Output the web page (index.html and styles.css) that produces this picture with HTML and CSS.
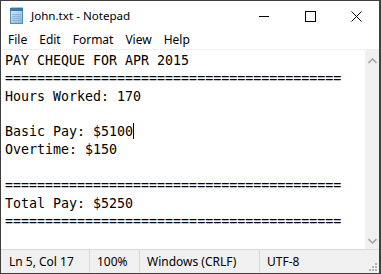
FILE: index.html
```html
<!DOCTYPE html>
<html>
<head>
<meta charset="utf-8">
<title>John.txt - Notepad</title>
<link rel="stylesheet" href="styles.css">
</head>
<body>
<div class="window">
  <div class="titlebar">
    <svg class="app-icon" width="17" height="17" viewBox="0 0 17 17">
      <defs>
        <linearGradient id="pg" x1="0" y1="0" x2="1" y2="1">
          <stop offset="0" stop-color="#d8ecfa"/>
          <stop offset="1" stop-color="#7fb4df"/>
        </linearGradient>
      </defs>
      <rect x="2.5" y="2.5" width="12" height="14" fill="url(#pg)" stroke="#5a8bb5"/>
      <rect x="2" y="1" width="13" height="3" fill="#3f77a8"/>
      <path d="M4 1v-1M6 1v-1M8 1v-1M10 1v-1M12 1v-1M14 1v-1" stroke="#6a8aa6" stroke-width="1"/>
      <path d="M4 7.5h9M4 9.5h9M4 11.5h9M4 13.5h9" stroke="#8fb6d8" stroke-width="1"/>
    </svg>
    <span class="title">John.txt - Notepad</span>
    <div class="controls">
      <div class="ctl"><svg width="10" height="10" viewBox="0 0 10 10"><path d="M0 5.5h10" stroke="#000" stroke-width="1"/></svg></div>
      <div class="ctl"><svg width="11" height="11" viewBox="0 0 11 11"><rect x="0.5" y="0.5" width="10" height="10" fill="none" stroke="#000"/></svg></div>
      <div class="ctl"><svg width="11" height="11" viewBox="0 0 11 11"><path d="M0.5 0.5l10 10M10.5 0.5l-10 10" stroke="#000" stroke-width="1"/></svg></div>
    </div>
  </div>
  <div class="menubar">
    <span class="menu-item">File</span>
    <span class="menu-item">Edit</span>
    <span class="menu-item">Format</span>
    <span class="menu-item">View</span>
    <span class="menu-item">Help</span>
  </div>
  <div class="editor">
    <div class="text">PAY CHEQUE FOR APR 2015
==========================================
Hours Worked: 170

Basic Pay: $5100<span class="caret"></span>
Overtime: $150

==========================================
Total Pay: $5250
==========================================</div>
    <div class="scrollbar">
      <svg class="arrow" width="9" height="6" viewBox="0 0 9 6"><path d="M0.5 5L4.5 1L8.5 5" fill="none" stroke="#a6a6a6" stroke-width="1.6"/></svg>
      <svg class="arrow" width="9" height="6" viewBox="0 0 9 6"><path d="M0.5 1L4.5 5L8.5 1" fill="none" stroke="#a6a6a6" stroke-width="1.6"/></svg>
    </div>
  </div>
  <div class="statusbar">
    <div class="cell c1">Ln 5, Col 17</div>
    <div class="cell c2">100%</div>
    <div class="cell c3">Windows (CRLF)</div>
    <div class="cell c4">UTF-8</div>
    <svg class="grip" width="10" height="10" viewBox="0 0 10 10">
      <rect x="7" y="1" width="2" height="2" fill="#b5b5b5"/>
      <rect x="4" y="4" width="2" height="2" fill="#b5b5b5"/>
      <rect x="7" y="4" width="2" height="2" fill="#b5b5b5"/>
      <rect x="1" y="7" width="2" height="2" fill="#b5b5b5"/>
      <rect x="4" y="7" width="2" height="2" fill="#b5b5b5"/>
      <rect x="7" y="7" width="2" height="2" fill="#b5b5b5"/>
    </svg>
  </div>
</div>
</body>
</html>
```
FILE: styles.css
```css
* { box-sizing: border-box; }
html, body { margin: 0; padding: 0; background: #fff; }
body { width: 381px; height: 274px; overflow: hidden; font-family: "Noto Sans", "Open Sans", sans-serif; font-size: 12px; color: #000; }
.window { width: 381px; height: 274px; border: 1px solid #3f3f3f; border-right-width: 2px; display: flex; flex-direction: column; background: #fff; }
.titlebar { height: 30px; display: flex; align-items: center; flex: none; }
.app-icon { margin-left: 7px; margin-top: -1px; }
.title { margin-left: 6px; font-size: 11.6px; margin-top: -1px; }
.controls { margin-left: auto; display: flex; height: 30px; }
.ctl { width: 46px; height: 30px; display: flex; align-items: center; justify-content: center; }
.menubar { height: 18px; display: flex; align-items: center; padding-left: 1px; flex: none; }
.menu-item { padding: 0 6px; font-size: 12px; line-height: 18px; }
.editor { flex: 1; display: flex; border-top: 1px solid #f0f0f0; min-height: 0; }
.text { flex: 1; white-space: pre; font-family: "DejaVu Sans Mono", monospace; font-size: 13.3px; line-height: 17.85px; padding: 2px 0 0 4px; overflow: hidden; }
.caret { display: inline-block; width: 1px; height: 16px; background: #000; vertical-align: -3px; margin-right: -1px; }
.scrollbar { width: 14px; background: #f0f0f0; display: flex; flex-direction: column; justify-content: space-between; align-items: center; padding: 8px 0 5px; }
.statusbar { height: 24px; border-top: 1px solid #dadada; background: #f0f0f0; display: flex; align-items: center; position: relative; flex: none; }
.cell { height: 23px; line-height: 23px; padding-left: 7px; border-right: 1px solid #dadada; font-size: 12px; white-space: nowrap; }
.c1 { width: 89px; padding-left: 8px; }
.c2 { width: 50px; }
.c3 { width: 120px; }
.c4 { border-right: none; }
.grip { position: absolute; right: 1px; bottom: 1px; }
```
